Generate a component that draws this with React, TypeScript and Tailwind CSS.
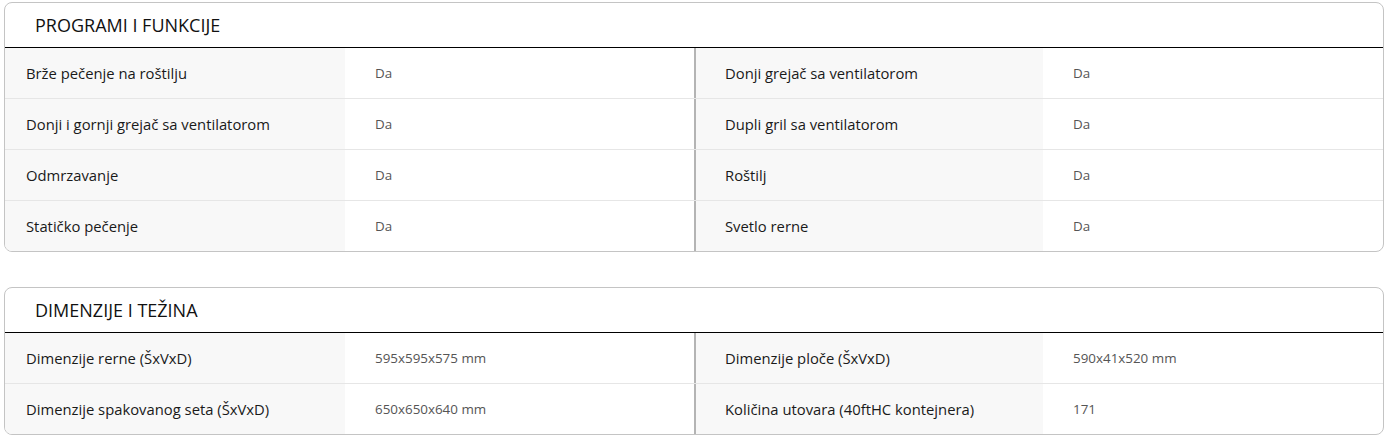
type Spec = {
  label: string;
  value: string;
};

type Section = {
  title: string;
  rows: [Spec, Spec][];
};

const sections: Section[] = [
  {
    title: "Programi i funkcije",
    rows: [
      [
        { label: "Brže pečenje na roštilju", value: "Da" },
        { label: "Donji grejač sa ventilatorom", value: "Da" },
      ],
      [
        { label: "Donji i gornji grejač sa ventilatorom", value: "Da" },
        { label: "Dupli gril sa ventilatorom", value: "Da" },
      ],
      [
        { label: "Odmrzavanje", value: "Da" },
        { label: "Roštilj", value: "Da" },
      ],
      [
        { label: "Statičko pečenje", value: "Da" },
        { label: "Svetlo rerne", value: "Da" },
      ],
    ],
  },
  {
    title: "Dimenzije i težina",
    rows: [
      [
        { label: "Dimenzije rerne (ŠxVxD)", value: "595x595x575 mm" },
        { label: "Dimenzije ploče (ŠxVxD)", value: "590x41x520 mm" },
      ],
      [
        { label: "Dimenzije spakovanog seta (ŠxVxD)", value: "650x650x640 mm" },
        { label: "Količina utovara (40ftHC kontejnera)", value: "171" },
      ],
    ],
  },
];

const App = () => {
  return (
    <div className="w-[1388px] bg-white px-[4px] pt-[2px] font-['Open_Sans','Noto_Sans',sans-serif]">
      {sections.map((section, i) => (
        <div
          key={section.title}
          className={`rounded-lg border border-[#c4c4c4] overflow-hidden ${
            i > 0 ? "mt-[35px]" : ""
          }`}
        >
          {/* Header */}
          <div className="h-[45px] flex items-center pl-[30px] border-b border-black">
            <h3 className="text-[18px] uppercase text-[#111]">
              {section.title}
            </h3>
          </div>

          {/* Rows */}
          {section.rows.map((row, r) => (
            <div
              key={r}
              className={`grid grid-cols-[340px_349px_349px_1fr] ${
                r > 0 ? "h-[51px] border-t border-[#e6e6e6]" : "h-[50px]"
              }`}
            >
              <div className="bg-[#f8f8f8] flex items-center pl-[21px] text-[14.8px] font-medium text-[#1a1a1a]">
                {row[0].label}
              </div>
              <div className="flex items-center pl-[30px] text-[13.4px] text-[#555]">
                {row[0].value}
              </div>
              <div className="bg-[#f8f8f8] flex items-center pl-[29px] text-[14.8px] font-medium text-[#1a1a1a] border-l-2 border-[#b4b4b4]">
                {row[1].label}
              </div>
              <div className="flex items-center pl-[30px] text-[13.4px] text-[#555]">
                {row[1].value}
              </div>
            </div>
          ))}
        </div>
      ))}
    </div>
  );
};

export default App;
